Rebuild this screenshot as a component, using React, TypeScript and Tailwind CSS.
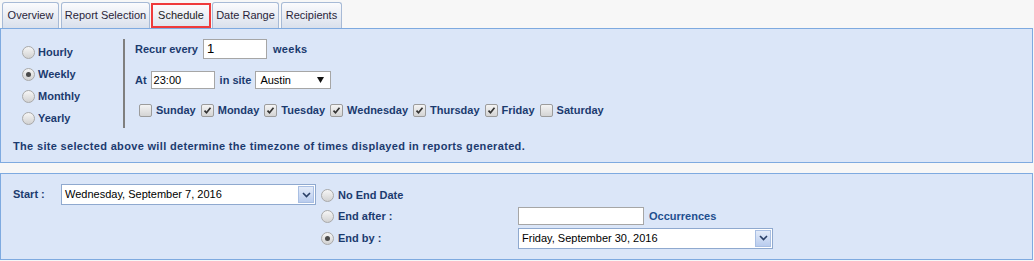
import React from "react";

const FONT = { fontFamily: '"Liberation Sans", Arial, sans-serif' };

function Radio({ checked = false }: { checked?: boolean }) {
  return (
    <span className="relative inline-block w-[13px] h-[13px] shrink-0 rounded-full border border-[#a9a9a9] bg-linear-to-b from-[#f6f6f6] to-[#d2d2d2]">
      {checked && (
        <span className="absolute left-[3px] top-[3px] w-[5px] h-[5px] rounded-full bg-[#4a4a4a]" />
      )}
    </span>
  );
}

function Check({ checked = false }: { checked?: boolean }) {
  return (
    <span className="inline-flex w-[13px] h-[13px] shrink-0 items-center justify-center rounded-[2px] border border-[#9c9c9c] bg-linear-to-b from-[#f4f4f4] to-[#d4d4d4]">
      {checked && (
        <svg width="11" height="11" viewBox="0 0 11 11">
          <path d="M2.5 5.6 L4.5 7.8 L8.5 2.8" stroke="#333" strokeWidth="1.7" fill="none" />
        </svg>
      )}
    </span>
  );
}

function DateSelect({ value, w, h }: { value: string; w: string; h: string }) {
  return (
    <div className={`flex items-stretch ${w} ${h} border border-[#8fa9cf] bg-white`}>
      <span className="flex-1 flex items-center pl-[3px] text-[11px] text-black">{value}</span>
      <span className="w-[16px] m-[1px] flex items-center justify-center border border-[#a9bfe3] bg-linear-to-b from-[#e3ebf9] to-[#b9ccee]">
        <svg width="9" height="6" viewBox="0 0 9 6">
          <path d="M1 1 L4.5 4.5 L8 1" stroke="#2a3f66" strokeWidth="1.6" fill="none" />
        </svg>
      </span>
    </div>
  );
}

const tabs = [
  { label: "Overview", w: "w-[57px]" },
  { label: "Report Selection", w: "w-[89px]" },
  { label: "Schedule", w: "w-[60px]", active: true },
  { label: "Date Range", w: "w-[67px]" },
  { label: "Recipients", w: "w-[61px]" },
];

const days = [
  { d: "Sunday", c: false },
  { d: "Monday", c: true },
  { d: "Tuesday", c: true },
  { d: "Wednesday", c: true },
  { d: "Thursday", c: true },
  { d: "Friday", c: true },
  { d: "Saturday", c: false },
];

export default function App() {
  const label = "text-[11px] font-bold text-[#1b3b6f] leading-[13px]";
  return (
    <div className="w-[1034px] h-[261px] bg-[#f7f7f7] overflow-hidden" style={FONT}>
      {/* Tabs */}
      <div className="flex items-end h-[28px] pl-[2px] gap-[2px]">
        {tabs.map((t) =>
          t.active ? (
            <div
              key={t.label}
              className={`${t.w} h-[25px] -mx-[1px] flex items-center justify-center border-2 border-[#ef3b3b] bg-linear-to-b from-[#fbfbfc] to-[#dfe5ef] text-[11px] text-[#222]`}
            >
              {t.label}
            </div>
          ) : (
            <div
              key={t.label}
              className={`${t.w} h-[26px] flex items-center justify-center rounded-t-[3px] border border-b-0 border-[#a7bad6] bg-linear-to-b from-[#fbfbfd] to-[#d9e0ec] text-[11px] text-[#2a1f3a]`}
            >
              {t.label}
            </div>
          )
        )}
      </div>

      {/* Panel 1 */}
      <div className="w-[1033px] h-[135px] border border-[#7eaae0] bg-[#dbe6f8]">
        <div className="flex pt-[10px]">
          <div className="w-[122px] pl-[21px] pt-[2px] flex flex-col">
            {[
              { l: "Hourly", c: false },
              { l: "Weekly", c: true },
              { l: "Monthly", c: false },
              { l: "Yearly", c: false },
            ].map((r) => (
              <div key={r.l} className="h-[22px] flex items-center gap-[3px]">
                <Radio checked={r.c} />
                <span className={label}>{r.l}</span>
              </div>
            ))}
          </div>
          <div className="w-[2px] h-[89px] bg-[#7f7f7f]" />
          <div className="ml-[10px] flex flex-col">
            <div className="h-[20px] flex items-center">
              <span className={label}>Recur every</span>
              <span className="ml-[5px] w-[64px] h-[20px] border border-[#a6a6a6] bg-white flex items-center pl-[3px] text-[13px] text-black">
                1
              </span>
              <span className={`${label} ml-[6px] tracking-[0.3px]`}>weeks</span>
            </div>
            <div className="mt-[12px] h-[18px] flex items-center">
              <span className={label}>At</span>
              <span className="ml-[4px] w-[64px] h-[18px] border border-[#a6a6a6] bg-white flex items-center pl-[2px] text-[11px] text-black">
                23:00
              </span>
              <span className={`${label} ml-[5px]`}>in site</span>
              <span className="ml-[4px] w-[76px] h-[18px] border border-[#a6a6a6] bg-white flex items-center justify-between pl-[4px] pr-[6px] text-[11px] text-black">
                Austin
                <svg width="7" height="6" viewBox="0 0 7 6">
                  <path d="M0 0 H7 L3.5 6 Z" fill="#111" />
                </svg>
              </span>
            </div>
            <div className="mt-[13px] h-[16px] flex items-center pl-[4px]">
              {days.map((x) => (
                <div key={x.d} className="flex items-center mr-[5px]">
                  <Check checked={x.c} />
                  <span className={`${label} ml-[4px]`}>{x.d}</span>
                </div>
              ))}
            </div>
          </div>
        </div>
        <div className={`${label} mt-[11px] pl-[12px] tracking-[0.33px]`}>
          The site selected above will determine the timezone of times displayed in reports generated.
        </div>
      </div>

      {/* Panel 2 */}
      <div className="mt-[10px] w-[1033px] h-[87px] border border-[#7eaae0] bg-[#dbe6f8]">
        <div className="flex items-start pt-[10px] pl-[12px]">
          <div className={`${label} w-[48px] h-[21px] flex items-center`}>Start :</div>
          <DateSelect value="Wednesday, September 7, 2016" w="w-[255px]" h="h-[21px]" />
          <div className="ml-[5px] flex flex-col">
            <div className="h-[22px] flex items-center">
              <div className="w-[197px] flex items-center gap-[4px]">
                <Radio />
                <span className={label}>No End Date</span>
              </div>
            </div>
            <div className="h-[20px] flex items-center">
              <div className="w-[197px] flex items-center gap-[4px]">
                <Radio />
                <span className={label}>End after :</span>
              </div>
              <span className="w-[126px] h-[18px] border border-[#a6a6a6] bg-white" />
              <span className="ml-[5px] text-[11px] font-bold text-[#1e4f8f]">Occurrences</span>
            </div>
            <div className="h-[24px] flex items-center">
              <div className="w-[197px] flex items-center gap-[4px]">
                <Radio checked />
                <span className={label}>End by :</span>
              </div>
              <DateSelect value="Friday, September 30, 2016" w="w-[255px]" h="h-[21px]" />
            </div>
          </div>
        </div>
      </div>
    </div>
  );
}
